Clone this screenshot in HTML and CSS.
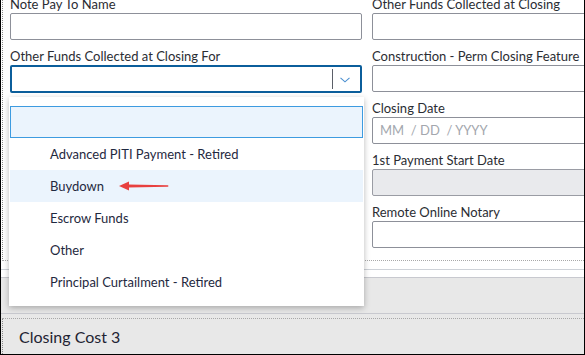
FILE: index.html
```html
<!DOCTYPE html>
<html lang="en">
<head>
    <meta charset="UTF-8">
    <meta name="viewport" content="width=device-width, initial-scale=1.0">
    <title>Closing Costs</title>
    <link rel="stylesheet" href="styles.css">
</head>
<body>
    <div class="frame">
        <div class="section">
            <div class="form">
                <div class="col">
                    <div class="field">
                        <label>Note Pay To Name</label>
                        <div class="input"></div>
                    </div>
                    <div class="field select-field">
                        <label>Other Funds Collected at Closing For</label>
                        <div class="select">
                            <span class="select-divider"></span>
                            <svg class="chevron" width="10" height="6" viewBox="0 0 10 6">
                                <polyline points="0.5,0.8 5,4.8 9.5,0.8" fill="none" stroke="#4a8fd0" stroke-width="1.1"/>
                            </svg>
                        </div>
                        <div class="menu">
                            <div class="menu-search"></div>
                            <div class="option">Advanced PITI Payment - Retired</div>
                            <div class="option active">Buydown
                                <svg class="arrow" width="50" height="10" viewBox="0 0 50 10">
                                    <polygon points="0,5 10,0.5 10,9.5" fill="#e8403f"/>
                                    <path d="M9 3.6 L49 4.2 Q50 5 49 5.8 L9 6.4 Z" fill="#e8403f"/>
                                </svg>
                            </div>
                            <div class="option">Escrow Funds</div>
                            <div class="option">Other</div>
                            <div class="option">Principal Curtailment - Retired</div>
                        </div>
                    </div>
                </div>
                <div class="col">
                    <div class="field">
                        <label>Other Funds Collected at Closing</label>
                        <div class="input"></div>
                    </div>
                    <div class="field">
                        <label>Construction - Perm Closing Feature</label>
                        <div class="input"></div>
                    </div>
                    <div class="field">
                        <label>Closing Date</label>
                        <div class="input date">MM &nbsp;/ DD &nbsp;/ YYYY</div>
                    </div>
                    <div class="field">
                        <label>1st Payment Start Date</label>
                        <div class="input disabled"></div>
                    </div>
                    <div class="field">
                        <label>Remote Online Notary</label>
                        <div class="input"></div>
                    </div>
                </div>
            </div>
        </div>
        <div class="divider"></div>
        <div class="lower">
            <div class="band"></div>
            <div class="panel-header">Closing Cost 3</div>
        </div>
    </div>
</body>
</html>
```

FILE: styles.css
```css
body {
    margin: 0;
    font-family: Lato, "Open Sans", sans-serif;
    background-color: #fff;
}
.frame {
    width: 585px;
    height: 355px;
    box-sizing: border-box;
    border-left: 1px solid #000;
    border-right: 1px solid #000;
    border-bottom: 1px solid #000;
    overflow: hidden;
    display: flex;
    flex-direction: column;
}
.section {
    margin-left: 1px;
    border-left: 1px dotted #8a8a8a;
    border-bottom: 1px dotted #a8a8a8;
    margin-top: -12px;
    padding: 0 0 12px 7px;
}
.form {
    display: grid;
    grid-template-columns: 352px 352px;
    column-gap: 10px;
}
.field {
    display: flex;
    flex-direction: column;
}
.field label {
    font-size: 13px;
    line-height: 16px;
    padding-top: 8px;
    margin-bottom: 1px;
    color: #2b2d33;
    white-space: nowrap;
}
.input {
    height: 27px;
    box-sizing: border-box;
    border: 1px solid #8d9099;
    border-radius: 2px;
    background-color: #fff;
}
.input.date {
    font-size: 13px;
    line-height: 25px;
    padding-left: 7px;
    color: #a3a7ae;
}
.input.disabled {
    background-color: #e9eaed;
    border-color: #9a9ca4;
}
.select-field {
    position: relative;
}
.select {
    height: 28px;
    box-sizing: border-box;
    border: 2px solid #0b5e9b;
    border-radius: 2px;
    display: flex;
    justify-content: flex-end;
    align-items: center;
}
.select-divider {
    width: 1px;
    height: 20px;
    background-color: #5b5f68;
}
.chevron {
    margin: 2px 10px 0 7px;
}
.menu {
    position: absolute;
    top: 57px;
    left: -1px;
    width: 355px;
    box-sizing: border-box;
    padding: 9px 1px 8px;
    background-color: #fff;
    box-shadow: 0 2px 6px rgba(0, 0, 0, 0.28);
    z-index: 2;
}
.menu-search {
    height: 32px;
    box-sizing: border-box;
    border: 1px solid #3d9be0;
    background-color: #ebf4fd;
}
.option {
    height: 32px;
    display: flex;
    align-items: center;
    padding-left: 40px;
    font-size: 13px;
    color: #1f2940;
}
.option.active {
    background-color: #ebf4fd;
}
.arrow {
    margin-left: 15px;
}
.divider {
    margin-top: 8px;
    height: 8px;
    border-top: 1px solid #ced2d8;
}
.lower {
    flex: 1;
    background-color: #e8e8e8;
}
.band {
    height: 35px;
    border-top: 1px solid #c8c9cf;
    border-bottom: 1px solid #c8c9cf;
    margin-bottom: 4px;
}
.panel-header {
    margin-left: 1px;
    border-left: 1px dotted #8a8a8a;
    border-top: 1px dotted #a8a8a8;
    height: 35px;
    padding-left: 16px;
    display: flex;
    align-items: center;
    font-size: 16px;
    color: #1f2433;
}
```
